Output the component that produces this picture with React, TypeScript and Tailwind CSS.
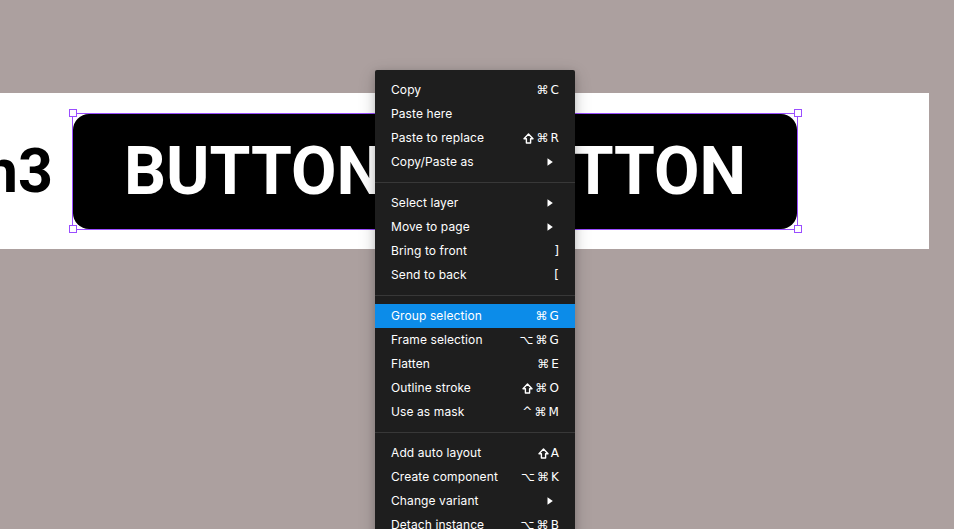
import React from 'react';

type Item = { label: string; keys?: string; sub?: boolean; active?: boolean };

const groups: Item[][] = [
  [
    { label: 'Copy', keys: '⌘C' },
    { label: 'Paste here' },
    { label: 'Paste to replace', keys: '⇧⌘R' },
    { label: 'Copy/Paste as', sub: true },
  ],
  [
    { label: 'Select layer', sub: true },
    { label: 'Move to page', sub: true },
    { label: 'Bring to front', keys: ']' },
    { label: 'Send to back', keys: '[' },
  ],
  [
    { label: 'Group selection', keys: '⌘G', active: true },
    { label: 'Frame selection', keys: '⌥⌘G' },
    { label: 'Flatten', keys: '⌘E' },
    { label: 'Outline stroke', keys: '⇧⌘O' },
    { label: 'Use as mask', keys: '^⌘M' },
  ],
  [
    { label: 'Add auto layout', keys: '⇧A' },
    { label: 'Create component', keys: '⌥⌘K' },
    { label: 'Change variant', sub: true },
    { label: 'Detach instance', keys: '⌥⌘B' },
    { label: 'Reset all changes' },
  ],
];

function Handle({ pos }: { pos: string }) {
  return <div className={`absolute w-[8px] h-[8px] bg-white border border-[#9a4dff] ${pos}`} />;
}

function ShiftIcon() {
  return (
    <svg width="11" height="11" viewBox="0 0 11 11" className="mr-[2px]">
      <path d="M5.5 1 L10 5.8 H7.6 V10 H3.4 V5.8 H1 Z" fill="none" stroke="white" strokeWidth="1.4" strokeLinejoin="round" />
    </svg>
  );
}

function Keys({ keys }: { keys: string }) {
  return (
    <span className="flex items-center font-['DejaVu_Sans','Inter',sans-serif] text-[12px]">
      {keys.split('').map((k, i) =>
        k === '⇧' ? (
          <ShiftIcon key={i} />
        ) : (
          <span key={i} className={i < keys.length - 1 ? 'mr-[2px]' : ''}>
            {k}
          </span>
        )
      )}
    </span>
  );
}

function MenuRow({ item }: { item: Item }) {
  return (
    <div className={`h-6 flex items-center justify-between px-4 ${item.active ? 'bg-[#0c8ce9]' : ''}`}>
      <span>{item.label}</span>
      {item.keys && <Keys keys={item.keys} />}
      {item.sub && (
        <svg width="6" height="8" viewBox="0 0 6 8" className="mr-[6px]">
          <path d="M0.5 0.3 L5.8 4 L0.5 7.7 Z" fill="white" />
        </svg>
      )}
    </div>
  );
}

export default function App() {
  return (
    <div className="relative w-[954px] h-[529px] overflow-hidden bg-[#aca09f] font-['Inter',sans-serif]">
      <div className="pt-[93px]">
        <div className="w-[929px] h-[156px] bg-white flex items-center">
          <div className="w-[57px] overflow-hidden flex justify-end shrink-0">
            <span className="font-['Roboto',sans-serif] font-bold text-[61px] leading-none text-black whitespace-nowrap pr-[4px]">
              h3
            </span>
          </div>
          <div className="relative ml-[15px] border border-[#9a4dff]">
            <div className="w-[724px] h-[115px] bg-black rounded-[16px] flex items-center justify-center gap-[104px] pt-[2px]">
              <span className="font-['Roboto',sans-serif] font-bold text-[66px] leading-none text-white">BUTTON</span>
              <span className="font-['Roboto',sans-serif] font-bold text-[66px] leading-none text-white">BUTTON</span>
            </div>
            <Handle pos="-left-[4.5px] -top-[4.5px]" />
            <Handle pos="-right-[4.5px] -top-[4.5px]" />
            <Handle pos="-left-[4.5px] -bottom-[4.5px]" />
            <Handle pos="-right-[4.5px] -bottom-[4.5px]" />
          </div>
        </div>
      </div>

      <div className="absolute left-[375px] top-[70px] w-[200px] bg-[#1e1e1e] rounded-[2px] py-2 text-white text-[12px] tracking-[0.1px] shadow-[0_5px_17px_rgba(0,0,0,0.2),0_2px_7px_rgba(0,0,0,0.15)]">
        {groups.map((g, gi) => (
          <div key={gi}>
            {gi > 0 && <div className="h-px bg-[#383838] my-2" />}
            {g.map((item) => (
              <MenuRow key={item.label} item={item} />
            ))}
          </div>
        ))}
      </div>
    </div>
  );
}
